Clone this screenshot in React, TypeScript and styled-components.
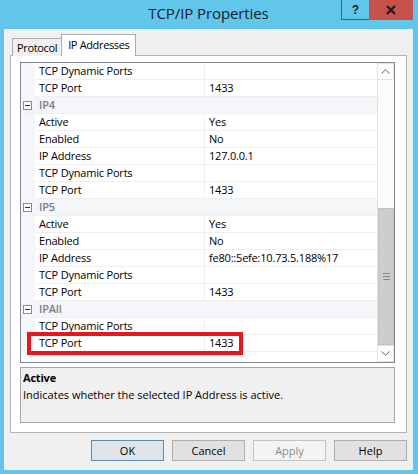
import React from "react";
import styled, { createGlobalStyle, css } from "styled-components";

interface PropRow {
  kind: "prop" | "cat";
  name: string;
  value?: string;
  marked?: boolean;
}

const rows: PropRow[] = [
  { kind: "prop", name: "TCP Dynamic Ports", value: "" },
  { kind: "prop", name: "TCP Port", value: "1433" },
  { kind: "cat", name: "IP4" },
  { kind: "prop", name: "Active", value: "Yes" },
  { kind: "prop", name: "Enabled", value: "No" },
  { kind: "prop", name: "IP Address", value: "127.0.0.1" },
  { kind: "prop", name: "TCP Dynamic Ports", value: "" },
  { kind: "prop", name: "TCP Port", value: "1433" },
  { kind: "cat", name: "IP5" },
  { kind: "prop", name: "Active", value: "Yes" },
  { kind: "prop", name: "Enabled", value: "No" },
  { kind: "prop", name: "IP Address", value: "fe80::5efe:10.73.5.188%17" },
  { kind: "prop", name: "TCP Dynamic Ports", value: "" },
  { kind: "prop", name: "TCP Port", value: "1433" },
  { kind: "cat", name: "IPAll" },
  { kind: "prop", name: "TCP Dynamic Ports", value: "" },
  { kind: "prop", name: "TCP Port", value: "1433", marked: true },
];

const buttons = [
  { label: "OK", variant: "default" },
  { label: "Cancel", variant: "normal" },
  { label: "Apply", variant: "disabled" },
  { label: "Help", variant: "normal" },
] as const;

export default function App() {
  return (
    <>
      <GlobalStyle />
      <Window>
        <TitleBar>
          <span />
          <Title>TCP/IP Properties</Title>
          <Caption>
            <HelpButton>?</HelpButton>
            <CloseButton>
              <svg width="12" height="10" viewBox="0 0 12 10">
                <path d="M2 1 L10 9 M10 1 L2 9" stroke="#1d1d1d" strokeWidth="2.2" />
              </svg>
            </CloseButton>
          </Caption>
        </TitleBar>
        <Client>
          <Tabs>
            <Tab>Protocol</Tab>
            <Tab $active>IP Addresses</Tab>
          </Tabs>
          <Panel>
            <Grid>
              <RowList>
                {rows.map((row, i) =>
                  row.kind === "cat" ? (
                    <CatRow key={i}>
                      <Gutter>
                        <Expander />
                      </Gutter>
                      <CatName>{row.name}</CatName>
                    </CatRow>
                  ) : (
                    <Row key={i} $marked={row.marked}>
                      <Gutter />
                      <NameCell>{row.name}</NameCell>
                      <ValueCell>{row.value}</ValueCell>
                    </Row>
                  )
                )}
              </RowList>
              <ScrollBar>
                <ArrowButton>
                  <svg width="9" height="5" viewBox="0 0 9 5">
                    <path d="M0.5 4.5 L4.5 0.8 L8.5 4.5" fill="none" stroke="#606060" />
                  </svg>
                </ArrowButton>
                <Track $offset={128}>
                  <Thumb>
                    <Grip />
                    <Grip />
                    <Grip />
                  </Thumb>
                </Track>
                <ArrowButton>
                  <svg width="9" height="5" viewBox="0 0 9 5">
                    <path d="M0.5 0.5 L4.5 4.2 L8.5 0.5" fill="none" stroke="#606060" />
                  </svg>
                </ArrowButton>
              </ScrollBar>
            </Grid>
            <Description>
              <DescTitle>Active</DescTitle>
              <DescText>Indicates whether the selected IP Address is active.</DescText>
            </Description>
          </Panel>
          <ButtonRow>
            {buttons.map((b) => (
              <DialogButton key={b.label} $variant={b.variant}>
                {b.label}
              </DialogButton>
            ))}
          </ButtonRow>
        </Client>
      </Window>
    </>
  );
}

const GlobalStyle = createGlobalStyle`
  html, body {
    margin: 0;
    padding: 0;
    background: #ffffff;
  }
  body {
    font-family: "Open Sans", "Noto Sans", sans-serif;
  }
`;

const Window = styled.div`
  width: 418px;
  height: 474px;
  box-sizing: border-box;
  padding: 0 5px 4px 4px;
  background: #62c5ea;
  display: flex;
  flex-direction: column;
`;

const TitleBar = styled.div`
  height: 29px;
  display: grid;
  grid-template-columns: 1fr auto 1fr;
  align-items: start;
`;

const Title = styled.div`
  font-size: 15px;
  line-height: 26px;
  color: #14232d;
  letter-spacing: -0.1px;
`;

const Caption = styled.div`
  justify-self: end;
  display: flex;
`;

const HelpButton = styled.div`
  width: 28px;
  height: 20px;
  box-sizing: border-box;
  border: 1px solid #3d6477;
  border-top: none;
  border-right: none;
  display: flex;
  align-items: center;
  justify-content: center;
  font-size: 12px;
  font-weight: 700;
  color: #1d1d1d;
  font-family: "Liberation Sans", sans-serif;
`;

const CloseButton = styled.div`
  width: 44px;
  height: 20px;
  background: #c7504b;
  display: flex;
  align-items: center;
  justify-content: center;
`;

const Client = styled.div`
  flex: 1;
  background: #f0f0f0;
  padding: 5px 6px 9px 6px;
  display: flex;
  flex-direction: column;
`;

const Tabs = styled.div`
  height: 22px;
  margin-bottom: -1px;
  padding-left: 2px;
  display: flex;
  align-items: flex-end;
  position: relative;
  z-index: 1;
`;

const Tab = styled.div<{ $active?: boolean }>`
  box-sizing: border-box;
  height: 18px;
  padding: 0 4px;
  border: 1px solid #acacac;
  border-bottom: none;
  background: #f0f0f0;
  font-size: 11px;
  line-height: 17px;
  letter-spacing: -0.35px;
  color: #000;
  ${({ $active }) =>
    $active &&
    css`
      height: 22px;
      margin-left: -1px;
      padding: 0 6px;
      background: #ffffff;
      line-height: 20px;
    `}
`;

const Panel = styled.div`
  flex: 1;
  border: 1px solid #b4b4b4;
  background: #ffffff;
  padding: 6px 11px 9px 9px;
  display: flex;
  flex-direction: column;
  gap: 4px;
`;

const Grid = styled.div`
  height: 301px;
  box-sizing: border-box;
  border: 1px solid #828790;
  background: #ffffff;
  display: flex;
`;

const RowList = styled.div`
  flex: 1;
  display: flex;
  flex-direction: column;
`;

const rowBase = css`
  height: 17px;
  box-sizing: border-box;
  display: grid;
  grid-template-columns: 14px 170px 1fr;
  font-size: 11px;
  line-height: 16px;
  letter-spacing: -0.2px;
  white-space: nowrap;
`;

const Row = styled.div<{ $marked?: boolean }>`
  ${rowBase}
  position: relative;
  ${({ $marked }) =>
    $marked &&
    css`
      &::after {
        content: "";
        position: absolute;
        left: 6px;
        top: -3px;
        width: 216px;
        height: 23px;
        box-sizing: border-box;
        border: 4px solid #e4161e;
      }
    `}
`;

const CatRow = styled.div`
  ${rowBase}
  background: #f4f6fa;
  border-bottom: 1px solid #eef0f4;
`;

const Gutter = styled.div`
  background: #f4f6fa;
  display: flex;
  align-items: center;
  padding-left: 2px;
`;

const Expander = styled.div`
  width: 9px;
  height: 9px;
  box-sizing: border-box;
  border: 1px solid #8e8e8e;
  background: #ffffff;
  position: relative;
  &::before {
    content: "";
    position: absolute;
    left: 1px;
    right: 1px;
    top: 3px;
    height: 1px;
    background: #333;
  }
`;

const NameCell = styled.div`
  padding-left: 4px;
  border-bottom: 1px solid #efefef;
  border-right: 1px solid #efefef;
  color: #000;
  overflow: hidden;
`;

const ValueCell = styled.div`
  padding-left: 4px;
  border-bottom: 1px solid #efefef;
  color: #000;
  overflow: hidden;
`;

const CatName = styled.div`
  padding-left: 4px;
  color: #7d7d7d;
  font-weight: 600;
`;

const ScrollBar = styled.div`
  width: 17px;
  box-sizing: border-box;
  border-left: 1px solid #e2e2e2;
  background: #fbfbfb;
  display: flex;
  flex-direction: column;
`;

const ArrowButton = styled.div`
  height: 17px;
  box-sizing: border-box;
  border: 1px solid #e2e2e2;
  border-left: none;
  background: #ffffff;
  display: flex;
  align-items: center;
  justify-content: center;
`;

const Track = styled.div<{ $offset: number }>`
  flex: 1;
  padding-top: ${({ $offset }) => $offset}px;
  display: flex;
  flex-direction: column;
`;

const Thumb = styled.div`
  height: 137px;
  box-sizing: border-box;
  background: #cdcdcd;
  border: 1px solid #c2c2c2;
  display: flex;
  flex-direction: column;
  align-items: center;
  justify-content: center;
  gap: 2px;
`;

const Grip = styled.div`
  width: 7px;
  height: 1px;
  background: #858585;
`;

const Description = styled.div`
  height: 56px;
  box-sizing: border-box;
  border: 1px solid #a5a5a5;
  background: #f0f0f0;
  padding: 1px 2px;
  font-size: 11px;
  line-height: 17px;
`;

const DescTitle = styled.div`
  font-weight: 700;
  color: #000;
  letter-spacing: -0.2px;
`;

const DescText = styled.div`
  color: #000;
`;

const ButtonRow = styled.div`
  margin-top: 7px;
  display: flex;
  justify-content: flex-end;
  gap: 8px;
`;

const DialogButton = styled.div<{ $variant: "default" | "normal" | "disabled" }>`
  width: 73px;
  height: 21px;
  box-sizing: border-box;
  border: 1px solid #adadad;
  background: #e1e1e1;
  display: flex;
  align-items: center;
  justify-content: center;
  font-size: 11px;
  color: #000;
  ${({ $variant }) =>
    $variant === "default" &&
    css`
      border-color: #5b8db8;
      background: #e0e4e8;
    `}
  ${({ $variant }) =>
    $variant === "disabled" &&
    css`
      border-color: #c4c4c4;
      background: #f4f4f4;
      color: #8a8a8a;
    `}
`;
